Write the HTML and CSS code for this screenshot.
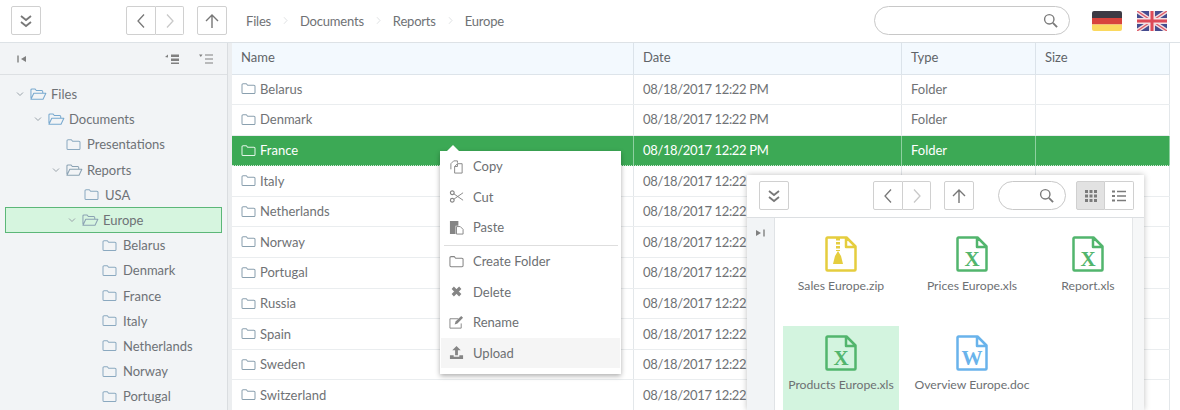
FILE: index.html
```html
<!DOCTYPE html>
<html lang="en">
<head>
<meta charset="utf-8">
<title>File Manager</title>
<link rel="stylesheet" href="styles.css">
</head>
<body>
<svg class="defs" width="0" height="0">
  <symbol id="folder" viewBox="0 0 16 14"><path d="M1 3a1.2 1.2 0 0 1 1.200-1.200h3.400l1.500 1.700h6.700A1.200 1.200 0 0 1 15 4.700v6.600a1.200 1.200 0 0 1-1.200 1.200H2.200A1.200 1.200 0 0 1 1 11.300z" fill="none" stroke="currentColor" stroke-width="1.100"/></symbol>
  <symbol id="folder-open" viewBox="0 0 18 14"><path d="M1 11.500V2.800a1.200 1.200 0 0 1 1.200-1.200h3l1.500 1.700h5.600a1.200 1.200 0 0 1 1.200 1.200v1.200M1 12.500l3-6.200h12.800l-3 6.200z" fill="none" stroke="currentColor" stroke-width="1.100" stroke-linejoin="round"/></symbol>
  <symbol id="chev-v" viewBox="0 0 8 6"><path d="M1 1.500l3 3 3-3" fill="none" stroke="currentColor"/></symbol>
  <symbol id="dbl" viewBox="0 0 14 14"><path d="M2 2l5 4 5-4M2 8l5 4 5-4" fill="none" stroke="currentColor" stroke-width="1.800"/></symbol>
  <symbol id="left" viewBox="0 0 10 16"><path d="M8 1.500L2 8l6 6.500" fill="none" stroke="currentColor" stroke-width="1.300"/></symbol>
  <symbol id="right" viewBox="0 0 10 16"><path d="M2 1.500L8 8l-6 6.500" fill="none" stroke="currentColor" stroke-width="1.300"/></symbol>
  <symbol id="up" viewBox="0 0 16 16"><path d="M8 15V2M2 8l6-6 6 6" fill="none" stroke="currentColor" stroke-width="1.400"/></symbol>
  <symbol id="search" viewBox="0 0 16 16"><circle cx="6.700" cy="6.700" r="5" fill="none" stroke="currentColor" stroke-width="1.500"/><path d="M10.500 10.500L15 15" stroke="currentColor" stroke-width="2"/></symbol>
  <symbol id="file" viewBox="0 0 32 36"><path d="M2.500 1.500h19l9 9v23a1 1 0 0 1-1 1h-27a1 1 0 0 1-1-1v-31a1 1 0 0 1 1-1zM21 2v9h9.500" fill="none" stroke="currentColor" stroke-width="2.500" stroke-linejoin="round"/></symbol>
</svg>

<header class="toolbar">
  <button class="btn first"><svg class="ic-dbl"><use href="#dbl"/></svg></button>
  <div class="group back-group">
    <button class="btn seg"><svg class="ic-nav"><use href="#left"/></svg></button>
    <button class="btn seg off"><svg class="ic-nav"><use href="#right"/></svg></button>
  </div>
  <button class="btn up-btn"><svg class="ic-up"><use href="#up"/></svg></button>
  <nav class="crumbs"><span>Files</span><i><svg class="sep"><use href="#right"/></svg></i><span>Documents</span><i><svg class="sep"><use href="#right"/></svg></i><span>Reports</span><i><svg class="sep"><use href="#right"/></svg></i><span>Europe</span></nav>
  <div class="search main-search"><svg class="ic-search"><use href="#search"/></svg></div>
  <svg class="flag" viewBox="0 0 30 20"><clipPath id="fc"><rect width="30" height="20" rx="2"/></clipPath><g clip-path="url(#fc)"><rect width="30" height="7" fill="#3d3a44"/><rect y="7" width="30" height="6.500" fill="#d8433d"/><rect y="13.500" width="30" height="6.500" fill="#fbd95f"/></g></svg>
  <svg class="flag uk" viewBox="0 0 30 20"><rect width="30" height="20" fill="#454c8f"/><path d="M0 0l30 20M30 0L0 20" stroke="#f3dfe2" stroke-width="4"/><path d="M0 0l30 20M30 0L0 20" stroke="#dd5a68" stroke-width="1.300"/><path d="M15 0v20M0 10h30" stroke="#f3dfe2" stroke-width="6"/><path d="M15 0v20M0 10h30" stroke="#dd4a58" stroke-width="3"/></svg>
</header>

<main class="workspace">
  <aside class="sidebar">
    <div class="side-head">
      <svg class="side-ic collapse" viewBox="0 0 10 10"><path d="M1 1.500v7" stroke="currentColor" stroke-width="1.400"/><path d="M9 2v6L4 5z" fill="currentColor"/></svg>
      <svg class="side-ic expand-a" viewBox="0 0 14 10"><path d="M6 .5h8v2.500H6zM6 4.500h8V7H6zM6 8.500h8V10H6z" fill="currentColor"/><path d="M0 3l3-2.500v3z" fill="currentColor"/></svg>
      <svg class="side-ic expand-b" viewBox="0 0 14 10"><path d="M6 1h8M6 5h8M6 9h8" stroke="currentColor" stroke-width="1.200"/><path d="M0 .5l3.500 0-1.700 2.500z" fill="currentColor"/></svg>
    </div>
    <ul class="tree">
      <li class="node n-files"><svg class="chev"><use href="#chev-v"/></svg><svg class="ic-open"><use href="#folder-open"/></svg><span>Files</span></li>
      <li class="node n-docs"><svg class="chev"><use href="#chev-v"/></svg><svg class="ic-open"><use href="#folder-open"/></svg><span>Documents</span></li>
      <li class="node n-pres"><svg class="ic-closed"><use href="#folder"/></svg><span>Presentations</span></li>
      <li class="node n-reports"><svg class="chev"><use href="#chev-v"/></svg><svg class="ic-open grey"><use href="#folder-open"/></svg><span>Reports</span></li>
      <li class="node n-usa"><svg class="ic-closed"><use href="#folder"/></svg><span>USA</span></li>
      <li class="node n-europe"><svg class="chev"><use href="#chev-v"/></svg><svg class="ic-open grey"><use href="#folder-open"/></svg><span>Europe</span></li>
      <li class="node n-leaf"><svg class="ic-closed"><use href="#folder"/></svg><span>Belarus</span></li>
      <li class="node n-leaf"><svg class="ic-closed"><use href="#folder"/></svg><span>Denmark</span></li>
      <li class="node n-leaf"><svg class="ic-closed"><use href="#folder"/></svg><span>France</span></li>
      <li class="node n-leaf"><svg class="ic-closed"><use href="#folder"/></svg><span>Italy</span></li>
      <li class="node n-leaf"><svg class="ic-closed"><use href="#folder"/></svg><span>Netherlands</span></li>
      <li class="node n-leaf"><svg class="ic-closed"><use href="#folder"/></svg><span>Norway</span></li>
      <li class="node n-leaf"><svg class="ic-closed"><use href="#folder"/></svg><span>Portugal</span></li>
    </ul>
  </aside>
  <div class="splitter"></div>
  <section class="grid">
    <div class="row head"><div>Name</div><div>Date</div><div>Type</div><div>Size</div></div>
    <div class="row"><div class="name"><svg class="ic-file-folder"><use href="#folder"/></svg>Belarus</div><div class="date">08/18/2017 12:22 PM</div><div>Folder</div><div></div></div>
    <div class="row"><div class="name"><svg class="ic-file-folder"><use href="#folder"/></svg>Denmark</div><div class="date">08/18/2017 12:22 PM</div><div>Folder</div><div></div></div>
    <div class="row selected"><div class="name"><svg class="ic-file-folder"><use href="#folder"/></svg>France</div><div class="date">08/18/2017 12:22 PM</div><div>Folder</div><div></div></div>
    <div class="row"><div class="name"><svg class="ic-file-folder"><use href="#folder"/></svg>Italy</div><div class="date">08/18/2017 12:22 PM</div><div>Folder</div><div></div></div>
    <div class="row"><div class="name"><svg class="ic-file-folder"><use href="#folder"/></svg>Netherlands</div><div class="date">08/18/2017 12:22 PM</div><div>Folder</div><div></div></div>
    <div class="row"><div class="name"><svg class="ic-file-folder"><use href="#folder"/></svg>Norway</div><div class="date">08/18/2017 12:22 PM</div><div>Folder</div><div></div></div>
    <div class="row"><div class="name"><svg class="ic-file-folder"><use href="#folder"/></svg>Portugal</div><div class="date">08/18/2017 12:22 PM</div><div>Folder</div><div></div></div>
    <div class="row"><div class="name"><svg class="ic-file-folder"><use href="#folder"/></svg>Russia</div><div class="date">08/18/2017 12:22 PM</div><div>Folder</div><div></div></div>
    <div class="row"><div class="name"><svg class="ic-file-folder"><use href="#folder"/></svg>Spain</div><div class="date">08/18/2017 12:22 PM</div><div>Folder</div><div></div></div>
    <div class="row"><div class="name"><svg class="ic-file-folder"><use href="#folder"/></svg>Sweden</div><div class="date">08/18/2017 12:22 PM</div><div>Folder</div><div></div></div>
    <div class="row"><div class="name"><svg class="ic-file-folder"><use href="#folder"/></svg>Switzerland</div><div class="date">08/18/2017 12:22 PM</div><div>Folder</div><div></div></div>
  </section>
</main>

<div class="menu">
  <div class="menu-item"><svg class="mi" viewBox="0 0 16 16"><path d="M2 11V5l3-3h4v2M6 15V8l3-3h5v10zM9 5v3H6" fill="none" stroke="currentColor"/></svg>Copy</div>
  <div class="menu-item"><svg class="mi" viewBox="0 0 16 16"><circle cx="3.500" cy="4" r="2" fill="none" stroke="currentColor" stroke-width="1.200"/><circle cx="3.500" cy="12" r="2" fill="none" stroke="currentColor" stroke-width="1.200"/><path d="M5 5l10 7M5 11l10-7" stroke="currentColor"/></svg>Cut</div>
  <div class="menu-item"><svg class="mi" viewBox="0 0 16 16"><path d="M1 1h9v5H7v9H1z" fill="currentColor"/><path d="M8 7h4l3 3v5H8z" fill="#fff" stroke="currentColor"/></svg>Paste</div>
  <div class="menu-sep"></div>
  <div class="menu-item"><svg class="mi" viewBox="0 0 16 14"><use href="#folder"/></svg>Create Folder</div>
  <div class="menu-item"><svg class="mi" viewBox="0 0 16 16"><path d="M4 4l8 8M12 4l-8 8" stroke="currentColor" stroke-width="3.400"/></svg>Delete</div>
  <div class="menu-item"><svg class="mi" viewBox="0 0 16 16"><path d="M13 9v5H1V4h9" fill="none" stroke="currentColor"/><path d="M6 10l1-3 6-6 2 2-6 6z" fill="currentColor"/></svg>Rename</div>
  <div class="menu-item hover"><svg class="mi" viewBox="0 0 16 16"><path d="M8 1l4.500 4.500H9.500V11h-3V5.500H3.500z" fill="currentColor"/><path d="M1 11h4v1.500h6V11h4v4H1z" fill="currentColor"/></svg>Upload</div>
</div>

<div class="window">
  <div class="win-bar">
    <button class="btn"><svg class="ic-dbl"><use href="#dbl"/></svg></button>
    <div class="group win-back">
      <button class="btn seg"><svg class="ic-nav"><use href="#left"/></svg></button>
      <button class="btn seg off"><svg class="ic-nav"><use href="#right"/></svg></button>
    </div>
    <button class="btn win-up"><svg class="ic-up"><use href="#up"/></svg></button>
    <div class="search win-search"><svg class="ic-search"><use href="#search"/></svg></div>
    <div class="group win-view">
      <button class="btn seg active"><svg class="ic-view" viewBox="0 0 14 14"><path d="M1 2.500h12M1 7h12M1 11.500h12" stroke="currentColor" stroke-width="3" stroke-dasharray="3 1.500"/></svg></button>
      <button class="btn seg"><svg class="ic-view" viewBox="0 0 14 14"><path d="M0 2.500h3M0 7h3M0 11.500h3" stroke="currentColor" stroke-width="2.200"/><path d="M5 2.500h9M5 7h9M5 11.500h9" stroke="currentColor" stroke-width="1.300"/></svg></button>
    </div>
  </div>
  <div class="win-body">
    <div class="win-side"><svg class="side-ic" viewBox="0 0 10 10"><path d="M9 1.500v7" stroke="currentColor" stroke-width="1.400"/><path d="M1 2v6l5-3z" fill="currentColor"/></svg></div>
    <div class="tiles">
      <figure class="tile"><div class="doc zip"><svg class="doc-ic"><use href="#file"/></svg><svg class="zipper" viewBox="0 0 12 28"><path d="M6 0v13" stroke="currentColor" stroke-width="4" stroke-dasharray="2.500 1.500"/><path d="M6 13l3 5 2 8H1l2-8z" fill="currentColor"/></svg></div><figcaption>Sales Europe.zip</figcaption></figure>
      <figure class="tile"><div class="doc xls"><svg class="doc-ic"><use href="#file"/></svg><b>X</b></div><figcaption>Prices Europe.xls</figcaption></figure>
      <figure class="tile"><div class="doc xls"><svg class="doc-ic"><use href="#file"/></svg><b>X</b></div><figcaption>Report.xls</figcaption></figure>
      <figure class="tile picked"><div class="doc xls"><svg class="doc-ic"><use href="#file"/></svg><b>X</b></div><figcaption>Products Europe.xls</figcaption></figure>
      <figure class="tile"><div class="doc word"><svg class="doc-ic"><use href="#file"/></svg><b>W</b></div><figcaption>Overview Europe.doc</figcaption></figure>
    </div>
    <div class="win-gutter"></div>
  </div>
</div>
</body>
</html>
```

FILE: styles.css
```css
* { box-sizing: border-box; }
html, body { margin: 0; height: 410px; overflow: hidden; background: #fff; }
body { position: relative; font: 13px/16px Lato, "Noto Sans", sans-serif; color: #6d7073; }
.defs { position: absolute; }
ul { list-style: none; margin: 0; padding: 0; }
figure { margin: 0; }
svg { display: block; flex: none; }

.toolbar { height: 43px; display: flex; align-items: center; padding: 0 13px 1px 11px; border-bottom: 1px solid #dde2e6; }
.btn { width: 30px; height: 29px; padding: 0; background: #fff; border: 1px solid #d0d0d0; border-radius: 2px; color: #777; display: flex; align-items: center; justify-content: center; }
.group { display: flex; }
.seg { border-radius: 0; }
.seg:first-child { border-radius: 2px 0 0 2px; }
.seg:last-child { border-radius: 0 2px 2px 0; border-left: 0; width: 28px; }
.off { color: #c9c9c9; }
.ic-dbl { width: 14px; height: 14px; color: #787878; }
.ic-nav { width: 10px; height: 16px; }
.ic-up { width: 16px; height: 16px; }
.back-group { margin-left: 85px; }
.up-btn { margin-left: 13px; }
.crumbs { display: flex; align-items: center; margin-left: 19px; color: #6f7275; letter-spacing: -.2px; }
.crumbs i { width: 29px; display: flex; justify-content: center; color: #cdd0d3; }
.sep { width: 5px; height: 9px; }
.search { border: 1px solid #c8c8c8; border-radius: 15px; display: flex; align-items: center; justify-content: flex-end; color: #7a7a7a; }
.ic-search { width: 15px; height: 15px; }
.main-search { width: 196px; height: 29px; margin-left: auto; padding-right: 11px; }
.flag { width: 30px; height: 20px; margin-left: 22px; }
.flag.uk { margin-left: 15px; }

.workspace { display: flex; height: 367px; overflow: hidden; }
.sidebar { width: 228px; flex: none; background: #f2f4f6; border-right: 1px solid #dadde0; }
.side-head { height: 32px; display: flex; align-items: center; padding: 0 14px 0 17px; border-bottom: 1px solid #dde0e3; color: #7f7f7f; }
.side-ic { width: 10px; height: 10px; color: #808080; }
.side-head .expand-a { width: 14px; margin-left: auto; margin-right: 20px; }
.side-head .expand-b { width: 14px; margin-right: 0; }
.tree { padding-top: 6.500px; }
.node { height: 25.2px; display: flex; align-items: center; white-space: nowrap; color: #6e7276; }
.chev { width: 8px; height: 6px; color: #9aa3aa; margin-right: 6px; }
.ic-open { width: 17px; height: 14px; color: #78a9cf; margin-right: 4px; }
.ic-open.grey { color: #8ba2b3; }
.ic-closed { width: 15px; height: 13px; color: #8ba9c0; margin-right: 6px; }
.n-files { padding-left: 16px; }
.n-docs { padding-left: 34px; }
.n-pres { padding-left: 66px; }
.n-reports { padding-left: 52px; }
.n-usa { padding-left: 84px; }
.n-europe { margin: 0 5px; padding-left: 62px; height: 25.2px; background: #d6f5df; border: 1px solid #5cb778; }
.n-leaf { padding-left: 102px; }

.splitter { width: 4px; flex: none; background: #eceef0; }
.grid { width: 938px; flex: none; }
.row { display: grid; grid-template-columns: 402px 268px 134px 134px; height: 30.6px; border-bottom: 1px solid #eaedef; }
.row > div { display: flex; align-items: center; padding: 0 0 .8px 9px; border-right: 1px solid #e3e7ea; color: #6f7275; white-space: nowrap; }
.row > .date { letter-spacing: -.35px; }
.row.head { height: 31.500px; background: #f3f9fe; border-bottom: 1px solid #dde4ea; }
.row.head > div { color: #5f6468; border-right-color: #dbe3ea; padding-bottom: 3px; }
.ic-file-folder { width: 15px; height: 13px; margin-right: 4px; color: #8aa0af; }
.row.selected { background: #3ca955; border-bottom: 1px dotted #cfe8d6; }
.row.selected > div { color: #fff; border-right-color: #8ed0a0; }
.row.selected .ic-file-folder { color: #e2f5e7; }

.menu { position: absolute; left: 440px; top: 151px; width: 181px; height: 223px; background: #fff; padding: 0 1px; box-shadow: 0 2px 5px rgba(0,0,0,.32); }
.menu::before { content: ""; position: absolute; left: 7px; top: -6px; border: 6px solid transparent; border-top: 0; border-bottom-color: #fff; }
.menu-item { height: 30.600px; display: flex; align-items: center; padding-left: 8px; color: #6d7073; }
.menu-item.hover { background: #f5f5f5; }
.mi { width: 15px; height: 15px; margin-right: 9px; color: #858585; }
.menu-sep { height: 1px; margin: 2px 2px 0 3px; background: #dedede; }

.window { position: absolute; left: 747px; top: 175px; width: 397px; height: 235px; background: #fff; box-shadow: 0 0 6px rgba(0,0,0,.25); overflow: hidden; }
.win-bar { height: 43px; padding: 6px 9px 0 12px; display: flex; align-items: flex-start; border-bottom: 1px solid #dcdfe2; }
.win-back { margin-left: 84px; }
.win-up { margin-left: 13px; }
.win-search { width: 68px; height: 29px; margin-left: 24px; padding-right: 11px; }
.win-view { margin-left: 10px; }
.win-view .seg { width: 29px; }
.active { background: #e2e2e2; }
.ic-view { width: 14px; height: 14px; color: #7b7b7b; }
.win-body { display: flex; height: 192px; }
.win-side { width: 28px; flex: none; padding: 10px 0 0 8px; background: #f2f4f6; border-right: 1px solid #e0e3e6; }
.tiles { flex: none; width: 357px; padding: 9px 0 0 8px; display: grid; grid-template-columns: 131px 116px 110px; grid-auto-rows: 99px; overflow: hidden; }
.win-gutter { flex: 1; background: #f6f7f8; border-left: 1px solid #e4e6e8; }
.tile { width: 116px; padding-top: 9px; display: flex; flex-direction: column; align-items: center; white-space: nowrap; color: #6d7073; font-size: 12.200px; }
.tile.picked { background: #d3f4df; }
figcaption { margin-top: 5.800px; }
.doc { position: relative; width: 32px; height: 36px; display: flex; justify-content: center; }
.doc-ic { position: absolute; left: 0; top: 0; width: 32px; height: 36px; }
.doc b { position: absolute; left: 0; right: 0; top: 13px; text-align: center; font: 700 21px/20px "Liberation Serif", serif; }
.zip { color: #e5cd3e; }
.zipper { width: 12px; height: 28px; margin-top: 2px; margin-right: 6px; }
.xls { color: #52b56d; }
.word { color: #69b3eb; }
```
